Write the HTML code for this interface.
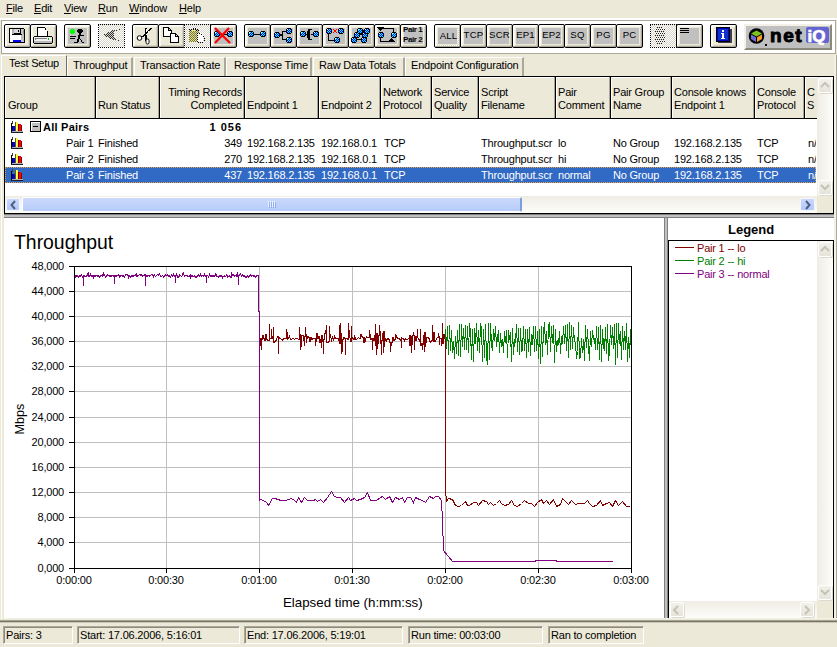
<!DOCTYPE html><html><head><meta charset="utf-8"><style>

*{margin:0;padding:0;box-sizing:border-box}
html,body{width:837px;height:647px;overflow:hidden;background:#ECE9D8;font-family:"Liberation Sans", sans-serif;font-size:11px;color:#000}
.ab{position:absolute}
.t{position:absolute;white-space:nowrap;line-height:13px;letter-spacing:-0.2px}
.u{text-decoration:underline}
.btn{position:absolute;top:24px;height:24px;border:1px solid #000;border-radius:2px;background:#ECE9D8;box-shadow:inset 1px 1px 0 #fff,inset -1px -1px 0 #ACA899,inset 2px 2px 0 #F7F6EF,inset -2px -2px 0 #D6D2C2}
.gin{position:absolute;left:3px;top:3px;right:3px;bottom:3px;background:#C0C0C0}
.dot{position:absolute;top:24px;height:24px;border:1px dotted #000;background:repeating-conic-gradient(#D8D5C8 0 25%,#FFFFFF 0 50%) 0 0/2px 2px}
.hd{position:absolute;top:77px;height:41px;border-right:1px solid #000}
.sp{position:absolute;background:#C0C0C0}
.stp{position:absolute;top:626px;height:18px;border-top:1px solid #ACA899;border-left:1px solid #ACA899;border-right:1px solid #fff;border-bottom:1px solid #fff;box-shadow:inset 1px 1px 0 #8C8A7C}

</style></head><body>
<div class="t" style="left:6px;top:2px"><span class="u">F</span>ile</div>
<div class="t" style="left:34px;top:2px"><span class="u">E</span>dit</div>
<div class="t" style="left:64px;top:2px"><span class="u">V</span>iew</div>
<div class="t" style="left:98px;top:2px"><span class="u">R</span>un</div>
<div class="t" style="left:129px;top:2px"><span class="u">W</span>indow</div>
<div class="t" style="left:179px;top:2px"><span class="u">H</span>elp</div>
<div class="ab" style="left:0;top:18px;width:837px;height:2px;background:#fff"></div>
<div class="ab" style="left:1px;top:20px;width:835px;height:34px;background:#fff;border-top:1px solid #ACA899;border-left:1px solid #ACA899;border-bottom:1px solid #ACA899;border-right:1px solid #ACA899"></div>
<div class="btn" style="left:4px;width:27px"></div>
<div class="btn" style="left:30px;width:27px"></div>
<div class="btn" style="left:64px;width:27px"><div class="gin"></div></div>
<div class="dot" style="left:98px;width:27px"></div>
<div class="btn" style="left:132px;width:27px"></div>
<div class="btn" style="left:158px;width:27px"></div>
<div class="dot" style="left:184px;width:27px"></div>
<div class="btn" style="left:210px;width:27px"><div class="gin"></div></div>
<div class="btn" style="left:244px;width:27px"><div class="gin"></div></div>
<div class="btn" style="left:270px;width:27px"><div class="gin"></div></div>
<div class="btn" style="left:296px;width:27px"><div class="gin"></div></div>
<div class="btn" style="left:322px;width:27px"><div class="gin"></div></div>
<div class="btn" style="left:348px;width:27px"><div class="gin"></div></div>
<div class="btn" style="left:374px;width:27px"><div class="gin"></div></div>
<div class="btn" style="left:400px;width:27px"><div class="gin"></div></div>
<div class="btn" style="left:434px;width:27px"><div class="gin"></div></div>
<div class="btn" style="left:460px;width:27px"><div class="gin"></div></div>
<div class="btn" style="left:486px;width:27px"><div class="gin"></div></div>
<div class="btn" style="left:512px;width:27px"><div class="gin"></div></div>
<div class="btn" style="left:538px;width:27px"><div class="gin"></div></div>
<div class="btn" style="left:564px;width:27px"><div class="gin"></div></div>
<div class="btn" style="left:590px;width:27px"><div class="gin"></div></div>
<div class="btn" style="left:616px;width:27px"><div class="gin"></div></div>
<div class="dot" style="left:650px;width:27px"></div>
<div class="btn" style="left:676px;width:27px"><div class="gin"></div></div>
<div class="btn" style="left:710px;width:27px"></div>
<div class="t" style="left:403px;top:25px;font-size:8px;line-height:10px;font-weight:bold;letter-spacing:-0.4px">Pair 1</div>
<div class="t" style="left:403px;top:35px;font-size:8px;line-height:10px;font-weight:bold;letter-spacing:-0.4px">Pair 2</div>
<div class="t" style="left:460px;width:27px;text-align:center;top:29px;font-size:9.6px;line-height:12px;letter-spacing:0.2px">TCP</div>
<div class="t" style="left:486px;width:27px;text-align:center;top:29px;font-size:9.6px;line-height:12px;letter-spacing:0.2px">SCR</div>
<div class="t" style="left:512px;width:27px;text-align:center;top:29px;font-size:9.6px;line-height:12px;letter-spacing:0.2px">EP1</div>
<div class="t" style="left:538px;width:27px;text-align:center;top:29px;font-size:9.6px;line-height:12px;letter-spacing:0.2px">EP2</div>
<div class="t" style="left:564px;width:27px;text-align:center;top:29px;font-size:9.6px;line-height:12px;letter-spacing:0.2px">SQ</div>
<div class="t" style="left:590px;width:27px;text-align:center;top:29px;font-size:9.6px;line-height:12px;letter-spacing:0.2px">PG</div>
<div class="t" style="left:616px;width:27px;text-align:center;top:29px;font-size:9.6px;line-height:12px;letter-spacing:0.2px">PC</div>
<div class="ab" style="left:436px;top:26px;width:23px;height:20px;border:1px dotted #fff"></div>
<div class="t" style="left:435px;width:27px;text-align:center;top:30px;font-size:9.6px;line-height:12px;letter-spacing:0.2px">ALL</div>
<div class="ab" style="left:744px;top:24px;width:88px;height:26px;background:#C0C0C0;border-top:2px solid #F4F2E8;border-left:2px solid #F4F2E8;border-right:2px solid #8A8878;border-bottom:2px solid #8A8878"></div>
<svg class="ab" style="left:0;top:0" width="837" height="56" shape-rendering="crispEdges">
<defs><pattern id="bl" width="2" height="2" patternUnits="userSpaceOnUse"><rect width="2" height="2" fill="#0000FF"/><rect width="1" height="1" fill="#00FFFF"/><rect x="1" y="1" width="1" height="1" fill="#00FFFF"/></pattern><pattern id="dk" width="2" height="2" patternUnits="userSpaceOnUse"><rect width="1" height="1" fill="#000"/><rect x="1" y="1" width="1" height="1" fill="#000"/></pattern><pattern id="ol" width="2" height="2" patternUnits="userSpaceOnUse"><rect width="2" height="2" fill="#fff"/><rect width="1" height="1" fill="#808000"/><rect x="1" y="1" width="1" height="1" fill="#808000"/></pattern><pattern id="gd" width="2" height="2" patternUnits="userSpaceOnUse"><rect width="2" height="2" fill="#fff"/><rect width="1" height="1" fill="#C8C4B8"/><rect x="1" y="1" width="1" height="1" fill="#C8C4B8"/></pattern></defs>
<rect x="9" y="28" width="15" height="15" fill="#000"/>
<rect x="24" y="29" width="1" height="14" fill="#000"/>
<rect x="10" y="29" width="3" height="13" fill="#fff"/>
<rect x="12" y="29" width="2" height="13" fill="#B0B0B0"/>
<rect x="21" y="29" width="3" height="13" fill="#C8C8C8"/>
<rect x="23" y="30" width="1" height="12" fill="#909090"/>
<rect x="14" y="29" width="6" height="4" fill="#D8D8D8"/>
<rect x="18" y="30" width="1" height="2" fill="#000"/>
<rect x="13" y="35" width="8" height="5" fill="#fff"/>
<rect x="13" y="40" width="8" height="2" fill="#0000FF"/>
<rect x="10" y="34" width="3" height="8" fill="#fff"/>
<rect x="21" y="34" width="3" height="8" fill="#C0C0C0"/>
<rect x="14" y="33" width="6" height="1" fill="#000"/>
<rect x="12" y="34" width="10" height="1" fill="#000"/>
<rect x="37" y="27" width="8" height="1" fill="#000"/>
<rect x="37" y="27" width="1" height="10" fill="#000"/>
<rect x="38" y="28" width="7" height="8" fill="#fff"/>
<rect x="45" y="28" width="1" height="2" fill="#000"/>
<rect x="46" y="30" width="1" height="2" fill="#000"/>
<rect x="47" y="31" width="1" height="5" fill="#000"/>
<rect x="44" y="30" width="3" height="2" fill="#fff"/>
<rect x="38" y="32" width="9" height="4" fill="#fff"/>
<rect x="34" y="36" width="18" height="1" fill="#000"/>
<rect x="33" y="37" width="1" height="6" fill="#000"/>
<rect x="52" y="37" width="1" height="6" fill="#000"/>
<rect x="34" y="43" width="18" height="1" fill="#000"/>
<rect x="34" y="37" width="18" height="6" fill="#F0F0F0"/>
<rect x="35" y="38" width="12" height="1" fill="#808080"/>
<rect x="35" y="38" width="1" height="2" fill="#808080"/>
<rect x="48" y="38" width="1" height="2" fill="#00C000"/>
<rect x="34" y="41" width="18" height="2" fill="#B8B8B8"/>
<rect x="71" y="29" width="3" height="5" fill="#00FF00"/>
<rect x="70" y="30" width="5" height="3" fill="#00FF00"/>
<rect x="78" y="29" width="4" height="4" fill="#000"/>
<rect x="77" y="30" width="6" height="2" fill="#000"/>
<rect x="79" y="33" width="2" height="3" fill="#000"/>
<rect x="78" y="35" width="2" height="4" fill="#000"/>
<rect x="80" y="35" width="4" height="1" fill="#000"/>
<rect x="77" y="39" width="2" height="3" fill="#000"/>
<rect x="74" y="42" width="4" height="1" fill="#000"/>
<rect x="80" y="39" width="1" height="1" fill="#000"/>
<rect x="81" y="40" width="1" height="2" fill="#000"/>
<rect x="82" y="42" width="2" height="1" fill="#000"/>
<rect x="70" y="36" width="6" height="1" fill="#000"/>
<rect x="70" y="38" width="5" height="1" fill="#000"/>
<rect x="119" y="29" width="1" height="1" fill="#303030"/>
<rect x="112" y="30" width="1" height="1" fill="#303030"/>
<rect x="114" y="30" width="1" height="1" fill="#303030"/>
<rect x="116" y="30" width="1" height="1" fill="#303030"/>
<rect x="111" y="31" width="1" height="1" fill="#303030"/>
<rect x="113" y="31" width="1" height="1" fill="#303030"/>
<rect x="108" y="32" width="1" height="1" fill="#303030"/>
<rect x="110" y="32" width="1" height="1" fill="#303030"/>
<rect x="112" y="32" width="1" height="1" fill="#303030"/>
<rect x="107" y="33" width="1" height="1" fill="#303030"/>
<rect x="109" y="33" width="1" height="1" fill="#303030"/>
<rect x="111" y="33" width="1" height="1" fill="#303030"/>
<rect x="113" y="33" width="1" height="1" fill="#303030"/>
<rect x="104" y="34" width="1" height="1" fill="#303030"/>
<rect x="106" y="34" width="1" height="1" fill="#303030"/>
<rect x="108" y="34" width="1" height="1" fill="#303030"/>
<rect x="110" y="34" width="1" height="1" fill="#303030"/>
<rect x="112" y="34" width="1" height="1" fill="#303030"/>
<rect x="105" y="35" width="1" height="1" fill="#303030"/>
<rect x="107" y="35" width="1" height="1" fill="#303030"/>
<rect x="109" y="35" width="1" height="1" fill="#303030"/>
<rect x="111" y="35" width="1" height="1" fill="#303030"/>
<rect x="113" y="35" width="1" height="1" fill="#303030"/>
<rect x="106" y="36" width="1" height="1" fill="#303030"/>
<rect x="108" y="36" width="1" height="1" fill="#303030"/>
<rect x="110" y="36" width="1" height="1" fill="#303030"/>
<rect x="112" y="36" width="1" height="1" fill="#303030"/>
<rect x="109" y="37" width="1" height="1" fill="#303030"/>
<rect x="111" y="37" width="1" height="1" fill="#303030"/>
<rect x="113" y="37" width="1" height="1" fill="#303030"/>
<rect x="110" y="38" width="1" height="1" fill="#303030"/>
<rect x="112" y="38" width="1" height="1" fill="#303030"/>
<rect x="114" y="38" width="1" height="1" fill="#303030"/>
<rect x="113" y="39" width="1" height="1" fill="#303030"/>
<rect x="115" y="39" width="1" height="1" fill="#303030"/>
<rect x="118" y="40" width="1" height="1" fill="#303030"/>
<rect x="145" y="28" width="2" height="13" fill="#000"/>
<rect x="146" y="29" width="1" height="6" fill="#fff"/>
<rect x="150" y="28" width="2" height="1" fill="#000"/>
<rect x="149" y="29" width="2" height="1" fill="#000"/>
<rect x="148" y="30" width="2" height="1" fill="#000"/>
<rect x="147" y="31" width="2" height="1" fill="#000"/>
<rect x="146" y="32" width="2" height="1" fill="#000"/>
<rect x="145" y="33" width="2" height="1" fill="#000"/>
<rect x="144" y="34" width="2" height="1" fill="#000"/>
<rect x="148" y="31" width="1" height="2" fill="#fff"/>
<circle cx="139.5" cy="38" r="2.3" fill="#fff" stroke="#000" stroke-width="1" shape-rendering="auto"/>
<rect x="141" y="36" width="3" height="1" fill="#000"/>
<rect x="143" y="35" width="2" height="1" fill="#000"/>
<rect x="146" y="39" width="3" height="5" rx="1.4" fill="#fff" stroke="#000" stroke-width="1" shape-rendering="auto"/>
<rect x="163" y="27" width="6" height="1" fill="#000"/>
<rect x="163" y="27" width="1" height="10" fill="#000"/>
<rect x="163" y="36" width="9" height="1" fill="#000"/>
<rect x="171" y="30" width="1" height="7" fill="#000"/>
<rect x="164" y="28" width="5" height="8" fill="#fff"/>
<rect x="169" y="30" width="2" height="6" fill="#fff"/>
<rect x="169" y="28" width="1" height="1" fill="#000"/>
<rect x="170" y="29" width="1" height="1" fill="#000"/>
<rect x="168" y="28" width="1" height="3" fill="#000"/>
<rect x="168" y="30" width="3" height="1" fill="#000"/>
<rect x="170" y="33" width="6" height="1" fill="#000"/>
<rect x="170" y="33" width="1" height="10" fill="#000"/>
<rect x="170" y="42" width="9" height="1" fill="#000"/>
<rect x="178" y="36" width="1" height="7" fill="#000"/>
<rect x="171" y="34" width="5" height="8" fill="#fff"/>
<rect x="176" y="36" width="2" height="6" fill="#fff"/>
<rect x="176" y="34" width="1" height="1" fill="#000"/>
<rect x="177" y="35" width="1" height="1" fill="#000"/>
<rect x="175" y="34" width="1" height="3" fill="#000"/>
<rect x="175" y="36" width="3" height="1" fill="#000"/>
<rect x="189" y="29" width="1" height="1" fill="#000"/>
<rect x="191" y="29" width="1" height="1" fill="#000"/>
<rect x="193" y="29" width="1" height="1" fill="#000"/>
<rect x="195" y="29" width="1" height="1" fill="#000"/>
<rect x="197" y="29" width="1" height="1" fill="#000"/>
<rect x="190" y="30" width="1" height="1" fill="#000"/>
<rect x="192" y="30" width="1" height="1" fill="#000"/>
<rect x="194" y="30" width="1" height="1" fill="#000"/>
<rect x="196" y="30" width="1" height="1" fill="#000"/>
<rect x="198" y="30" width="1" height="1" fill="#000"/>
<rect x="189" y="31" width="1" height="1" fill="#808000"/>
<rect x="191" y="31" width="1" height="1" fill="#808000"/>
<rect x="193" y="31" width="1" height="1" fill="#808000"/>
<rect x="195" y="31" width="1" height="1" fill="#808000"/>
<rect x="197" y="31" width="1" height="1" fill="#808000"/>
<rect x="190" y="32" width="1" height="1" fill="#808000"/>
<rect x="192" y="32" width="1" height="1" fill="#808000"/>
<rect x="194" y="32" width="1" height="1" fill="#808000"/>
<rect x="196" y="32" width="1" height="1" fill="#808000"/>
<rect x="198" y="32" width="1" height="1" fill="#808000"/>
<rect x="189" y="33" width="1" height="1" fill="#808000"/>
<rect x="191" y="33" width="1" height="1" fill="#808000"/>
<rect x="193" y="33" width="1" height="1" fill="#808000"/>
<rect x="195" y="33" width="1" height="1" fill="#808000"/>
<rect x="197" y="33" width="1" height="1" fill="#808000"/>
<rect x="190" y="34" width="1" height="1" fill="#808000"/>
<rect x="192" y="34" width="1" height="1" fill="#808000"/>
<rect x="194" y="34" width="1" height="1" fill="#808000"/>
<rect x="196" y="34" width="1" height="1" fill="#808000"/>
<rect x="198" y="34" width="1" height="1" fill="#808000"/>
<rect x="189" y="35" width="1" height="1" fill="#808000"/>
<rect x="191" y="35" width="1" height="1" fill="#808000"/>
<rect x="193" y="35" width="1" height="1" fill="#808000"/>
<rect x="195" y="35" width="1" height="1" fill="#808000"/>
<rect x="197" y="35" width="1" height="1" fill="#808000"/>
<rect x="190" y="36" width="1" height="1" fill="#808000"/>
<rect x="192" y="36" width="1" height="1" fill="#808000"/>
<rect x="194" y="36" width="1" height="1" fill="#808000"/>
<rect x="196" y="36" width="1" height="1" fill="#808000"/>
<rect x="198" y="36" width="1" height="1" fill="#808000"/>
<rect x="189" y="37" width="1" height="1" fill="#808000"/>
<rect x="191" y="37" width="1" height="1" fill="#808000"/>
<rect x="193" y="37" width="1" height="1" fill="#808000"/>
<rect x="195" y="37" width="1" height="1" fill="#808000"/>
<rect x="197" y="37" width="1" height="1" fill="#808000"/>
<rect x="190" y="38" width="1" height="1" fill="#808000"/>
<rect x="192" y="38" width="1" height="1" fill="#808000"/>
<rect x="194" y="38" width="1" height="1" fill="#808000"/>
<rect x="196" y="38" width="1" height="1" fill="#808000"/>
<rect x="198" y="38" width="1" height="1" fill="#808000"/>
<rect x="189" y="39" width="1" height="1" fill="#808000"/>
<rect x="191" y="39" width="1" height="1" fill="#808000"/>
<rect x="193" y="39" width="1" height="1" fill="#808000"/>
<rect x="195" y="39" width="1" height="1" fill="#808000"/>
<rect x="197" y="39" width="1" height="1" fill="#808000"/>
<rect x="190" y="40" width="1" height="1" fill="#808000"/>
<rect x="192" y="40" width="1" height="1" fill="#808000"/>
<rect x="194" y="40" width="1" height="1" fill="#808000"/>
<rect x="196" y="40" width="1" height="1" fill="#808000"/>
<rect x="198" y="40" width="1" height="1" fill="#808000"/>
<rect x="189" y="41" width="1" height="1" fill="#808000"/>
<rect x="191" y="41" width="1" height="1" fill="#808000"/>
<rect x="193" y="41" width="1" height="1" fill="#808000"/>
<rect x="195" y="41" width="1" height="1" fill="#808000"/>
<rect x="197" y="41" width="1" height="1" fill="#808000"/>
<rect x="193" y="28" width="1" height="1" fill="#000"/>
<rect x="195" y="28" width="1" height="1" fill="#000"/>
<rect x="192" y="30" width="1" height="1" fill="#FFFF00"/>
<rect x="194" y="30" width="1" height="1" fill="#FFFF00"/>
<rect x="197" y="33" width="6" height="9" fill="#fff"/>
<rect x="197" y="33" width="1" height="1" fill="#000"/>
<rect x="199" y="33" width="1" height="1" fill="#000"/>
<rect x="201" y="34" width="1" height="1" fill="#000"/>
<rect x="203" y="36" width="1" height="1" fill="#000"/>
<rect x="204" y="38" width="1" height="1" fill="#000"/>
<rect x="204" y="40" width="1" height="1" fill="#000"/>
<rect x="202" y="42" width="1" height="1" fill="#000"/>
<rect x="200" y="42" width="1" height="1" fill="#000"/>
<rect x="198" y="42" width="1" height="1" fill="#000"/>
<rect x="197" y="35" width="1" height="1" fill="#000"/>
<rect x="197" y="37" width="1" height="1" fill="#000"/>
<rect x="197" y="39" width="1" height="1" fill="#000"/>
<rect x="197" y="41" width="1" height="1" fill="#000"/>
<rect x="215" y="31" width="4" height="6" fill="#000"/>
<rect x="214" y="32" width="6" height="4" fill="#000"/>
<rect x="215" y="32" width="4" height="4" fill="url(#bl)"/>
<rect x="215" y="32" width="1" height="1" fill="#fff"/>
<rect x="228" y="31" width="4" height="6" fill="#000"/>
<rect x="227" y="32" width="6" height="4" fill="#000"/>
<rect x="228" y="32" width="4" height="4" fill="url(#bl)"/>
<rect x="228" y="32" width="1" height="1" fill="#fff"/>
<rect x="220" y="34" width="7" height="1" fill="#000"/>
<path d="M215 28 L230 43 M229 28 L215 43" stroke="#FF0000" stroke-width="2.2" shape-rendering="auto"/>
<rect x="249" y="31" width="4" height="6" fill="#000"/>
<rect x="248" y="32" width="6" height="4" fill="#000"/>
<rect x="249" y="32" width="4" height="4" fill="url(#bl)"/>
<rect x="249" y="32" width="1" height="1" fill="#fff"/>
<rect x="261" y="31" width="4" height="6" fill="#000"/>
<rect x="260" y="32" width="6" height="4" fill="#000"/>
<rect x="261" y="32" width="4" height="4" fill="url(#bl)"/>
<rect x="261" y="32" width="1" height="1" fill="#fff"/>
<rect x="254" y="34" width="6" height="1" fill="#000"/>
<rect x="275" y="32" width="4" height="6" fill="#000"/>
<rect x="274" y="33" width="6" height="4" fill="#000"/>
<rect x="275" y="33" width="4" height="4" fill="url(#bl)"/>
<rect x="275" y="33" width="1" height="1" fill="#fff"/>
<rect x="287" y="28" width="4" height="6" fill="#000"/>
<rect x="286" y="29" width="6" height="4" fill="#000"/>
<rect x="287" y="29" width="4" height="4" fill="url(#bl)"/>
<rect x="287" y="29" width="1" height="1" fill="#fff"/>
<rect x="287" y="37" width="4" height="6" fill="#000"/>
<rect x="286" y="38" width="6" height="4" fill="#000"/>
<rect x="287" y="38" width="4" height="4" fill="url(#bl)"/>
<rect x="287" y="38" width="1" height="1" fill="#fff"/>
<rect x="280" y="34" width="3" height="2" fill="#000"/>
<rect x="282" y="31" width="1" height="9" fill="#000"/>
<rect x="283" y="31" width="3" height="1" fill="#000"/>
<rect x="283" y="39" width="3" height="1" fill="#000"/>
<rect x="301" y="31" width="4" height="6" fill="#000"/>
<rect x="300" y="32" width="6" height="4" fill="#000"/>
<rect x="301" y="32" width="4" height="4" fill="url(#bl)"/>
<rect x="301" y="32" width="1" height="1" fill="#fff"/>
<rect x="314" y="31" width="4" height="6" fill="#000"/>
<rect x="313" y="32" width="6" height="4" fill="#000"/>
<rect x="314" y="32" width="4" height="4" fill="url(#bl)"/>
<rect x="314" y="32" width="1" height="1" fill="#fff"/>
<rect x="306" y="34" width="2" height="1" fill="#000"/>
<rect x="311" y="34" width="2" height="1" fill="#000"/>
<rect x="308" y="29" width="2" height="11" fill="#000"/>
<rect x="307" y="31" width="1" height="7" fill="#000"/>
<rect x="310" y="29" width="2" height="1" fill="#000"/>
<rect x="310" y="39" width="2" height="1" fill="#000"/>
<rect x="327" y="28" width="4" height="6" fill="#000"/>
<rect x="326" y="29" width="6" height="4" fill="#000"/>
<rect x="327" y="29" width="4" height="4" fill="url(#bl)"/>
<rect x="327" y="29" width="1" height="1" fill="#fff"/>
<rect x="339" y="28" width="4" height="6" fill="#000"/>
<rect x="338" y="29" width="6" height="4" fill="#000"/>
<rect x="339" y="29" width="4" height="4" fill="url(#bl)"/>
<rect x="339" y="29" width="1" height="1" fill="#fff"/>
<rect x="335" y="37" width="4" height="6" fill="#000"/>
<rect x="334" y="38" width="6" height="4" fill="#000"/>
<rect x="335" y="38" width="4" height="4" fill="url(#bl)"/>
<rect x="335" y="38" width="1" height="1" fill="#fff"/>
<path d="M333 29 L337 33 M337 29 L333 33" stroke="#FF0000" stroke-width="1" shape-rendering="auto"/>
<rect x="328" y="34" width="1" height="6" fill="#000"/>
<rect x="328" y="40" width="6" height="1" fill="#000"/>
<rect x="352" y="37" width="4" height="6" fill="#000"/>
<rect x="351" y="38" width="6" height="4" fill="#000"/>
<rect x="352" y="38" width="4" height="4" fill="url(#bl)"/>
<rect x="352" y="38" width="1" height="1" fill="#fff"/>
<rect x="362" y="37" width="4" height="6" fill="#000"/>
<rect x="361" y="38" width="6" height="4" fill="#000"/>
<rect x="362" y="38" width="4" height="4" fill="url(#bl)"/>
<rect x="362" y="38" width="1" height="1" fill="#fff"/>
<rect x="355" y="32" width="4" height="6" fill="#000"/>
<rect x="354" y="33" width="6" height="4" fill="#000"/>
<rect x="355" y="33" width="4" height="4" fill="url(#bl)"/>
<rect x="355" y="33" width="1" height="1" fill="#fff"/>
<rect x="363" y="32" width="4" height="6" fill="#000"/>
<rect x="362" y="33" width="6" height="4" fill="#000"/>
<rect x="363" y="33" width="4" height="4" fill="url(#bl)"/>
<rect x="363" y="33" width="1" height="1" fill="#fff"/>
<rect x="358" y="28" width="4" height="6" fill="#000"/>
<rect x="357" y="29" width="6" height="4" fill="#000"/>
<rect x="358" y="29" width="4" height="4" fill="url(#bl)"/>
<rect x="358" y="29" width="1" height="1" fill="#fff"/>
<rect x="365" y="28" width="4" height="6" fill="#000"/>
<rect x="364" y="29" width="6" height="4" fill="#000"/>
<rect x="365" y="29" width="4" height="4" fill="url(#bl)"/>
<rect x="365" y="29" width="1" height="1" fill="#fff"/>
<rect x="357" y="39" width="4" height="1" fill="#000"/>
<rect x="360" y="34" width="2" height="1" fill="#000"/>
<rect x="363" y="30" width="1" height="2" fill="#000"/>
<rect x="379" y="32" width="4" height="6" fill="#000"/>
<rect x="378" y="33" width="6" height="4" fill="#000"/>
<rect x="379" y="33" width="4" height="4" fill="url(#bl)"/>
<rect x="379" y="33" width="1" height="1" fill="#fff"/>
<rect x="392" y="32" width="4" height="6" fill="#000"/>
<rect x="391" y="33" width="6" height="4" fill="#000"/>
<rect x="392" y="33" width="4" height="4" fill="url(#bl)"/>
<rect x="392" y="33" width="1" height="1" fill="#fff"/>
<rect x="380" y="28" width="14" height="1" fill="#000"/>
<rect x="393" y="28" width="1" height="4" fill="#000"/>
<rect x="380" y="38" width="1" height="4" fill="#000"/>
<rect x="380" y="41" width="14" height="1" fill="#000"/>
<path d="M377 27 L384 27 L380 31 Z M388 42 L395 42 L391 38 Z" fill="#000"/>
<rect x="680" y="28" width="9" height="1" fill="#000"/>
<rect x="680" y="30" width="9" height="1" fill="#000"/>
<rect x="680" y="32" width="9" height="1" fill="#000"/>
<rect x="657" y="27" width="1" height="1" fill="#202020"/>
<rect x="659" y="27" width="1" height="1" fill="#202020"/>
<rect x="661" y="27" width="1" height="1" fill="#202020"/>
<rect x="656" y="29" width="1" height="1" fill="#202020"/>
<rect x="658" y="29" width="1" height="1" fill="#202020"/>
<rect x="660" y="29" width="1" height="1" fill="#202020"/>
<rect x="662" y="29" width="1" height="1" fill="#202020"/>
<rect x="664" y="29" width="1" height="1" fill="#202020"/>
<rect x="655" y="31" width="1" height="1" fill="#202020"/>
<rect x="657" y="31" width="1" height="1" fill="#202020"/>
<rect x="659" y="31" width="1" height="1" fill="#202020"/>
<rect x="661" y="31" width="1" height="1" fill="#202020"/>
<rect x="663" y="31" width="1" height="1" fill="#202020"/>
<rect x="656" y="33" width="1" height="1" fill="#202020"/>
<rect x="658" y="33" width="1" height="1" fill="#202020"/>
<rect x="660" y="33" width="1" height="1" fill="#202020"/>
<rect x="662" y="33" width="1" height="1" fill="#202020"/>
<rect x="664" y="33" width="1" height="1" fill="#202020"/>
<rect x="655" y="35" width="1" height="1" fill="#202020"/>
<rect x="657" y="35" width="1" height="1" fill="#202020"/>
<rect x="659" y="35" width="1" height="1" fill="#202020"/>
<rect x="661" y="35" width="1" height="1" fill="#202020"/>
<rect x="663" y="35" width="1" height="1" fill="#202020"/>
<rect x="656" y="37" width="1" height="1" fill="#202020"/>
<rect x="658" y="37" width="1" height="1" fill="#202020"/>
<rect x="660" y="37" width="1" height="1" fill="#202020"/>
<rect x="662" y="37" width="1" height="1" fill="#202020"/>
<rect x="664" y="37" width="1" height="1" fill="#202020"/>
<rect x="655" y="39" width="1" height="1" fill="#202020"/>
<rect x="657" y="39" width="1" height="1" fill="#202020"/>
<rect x="659" y="39" width="1" height="1" fill="#202020"/>
<rect x="661" y="39" width="1" height="1" fill="#202020"/>
<rect x="663" y="39" width="1" height="1" fill="#202020"/>
<rect x="656" y="41" width="1" height="1" fill="#202020"/>
<rect x="658" y="41" width="1" height="1" fill="#202020"/>
<rect x="660" y="41" width="1" height="1" fill="#202020"/>
<rect x="662" y="41" width="1" height="1" fill="#202020"/>
<rect x="664" y="41" width="1" height="1" fill="#202020"/>
<rect x="657" y="43" width="1" height="1" fill="#202020"/>
<rect x="659" y="43" width="1" height="1" fill="#202020"/>
<rect x="661" y="43" width="1" height="1" fill="#202020"/>
<rect x="716" y="27" width="14" height="15" fill="#000"/>
<rect x="717" y="28" width="12" height="13" fill="#0000C0"/>
<rect x="718" y="29" width="10" height="11" fill="url(#bl)"/>
<rect x="718" y="29" width="10" height="11" fill="#1030D0"/>
<rect x="730" y="29" width="2" height="14" fill="#404040"/>
<rect x="718" y="42" width="14" height="1" fill="#404040"/>
<rect x="722" y="30" width="2" height="2" fill="#fff"/>
<rect x="721" y="33" width="3" height="1" fill="#fff"/>
<rect x="722" y="34" width="2" height="4" fill="#fff"/>
<rect x="721" y="38" width="4" height="1" fill="#fff"/>
<circle cx="756.5" cy="36" r="7.8" fill="#000" shape-rendering="auto"/>
<path d="M751 33.5 L756.5 30.5 L762 33.5 L756.5 36.5 Z" fill="#7BC31E" shape-rendering="auto"/>
<path d="M751 34.5 L756 37.2 L756 42 L751 39 Z" fill="#6A6ADA" shape-rendering="auto"/>
<path d="M762 34.5 L757 37.2 L757 42 L762 39 Z" fill="#F59A2A" shape-rendering="auto"/>
<rect x="765" y="44" width="2" height="2" fill="#000"/>
<text x="770" y="42" font-family="Liberation Sans" font-weight="bold" font-size="19" letter-spacing="1.6" fill="#000" stroke="#000" stroke-width="1" shape-rendering="auto">net</text>
<rect x="806" y="27" width="23" height="16" rx="3" fill="#6464D0"/>
<text x="807.5" y="42" font-family="Liberation Sans" font-weight="bold" font-size="17" letter-spacing="0" fill="#fff" stroke="#fff" stroke-width="0.7" shape-rendering="auto">iQ</text>
</svg>
<div class="ab" style="left:0;top:55px;width:837px;height:22px;background:#ECE9D8"></div>
<div class="ab" style="left:67px;top:57px;width:66px;height:19px;border-top:1px solid #fff;border-left:1px solid #fff;border-right:2px solid #ACA899"></div>
<div class="t" style="left:73px;top:59px">Throughput</div>
<div class="ab" style="left:134px;top:57px;width:92px;height:19px;border-top:1px solid #fff;border-left:1px solid #fff;border-right:2px solid #ACA899"></div>
<div class="t" style="left:140px;top:59px">Transaction Rate</div>
<div class="ab" style="left:226px;top:57px;width:86px;height:19px;border-top:1px solid #fff;border-left:1px solid #fff;border-right:2px solid #ACA899"></div>
<div class="t" style="left:234px;top:59px">Response Time</div>
<div class="ab" style="left:313px;top:57px;width:92px;height:19px;border-top:1px solid #fff;border-left:1px solid #fff;border-right:2px solid #ACA899"></div>
<div class="t" style="left:319px;top:59px">Raw Data Totals</div>
<div class="ab" style="left:405px;top:57px;width:119px;height:19px;border-top:1px solid #fff;border-left:1px solid #fff;border-right:2px solid #ACA899"></div>
<div class="t" style="left:411px;top:59px">Endpoint Configuration</div>
<div class="ab" style="left:1px;top:55px;width:66px;height:21px;border-top:1px solid #fff;border-left:1px solid #fff;border-right:1px solid #716F64;background:#ECE9D8"></div>
<div class="t" style="left:9px;top:57px">Test Setup</div>
<div class="ab" style="left:4px;top:76px;width:830px;height:138px;border:1px solid #000;background:#fff"></div>
<div class="ab" style="left:5px;top:77px;width:812px;height:42px;background:#ECE9D8;border-bottom:1px solid #000"></div>
<div class="ab" style="left:5px;top:77px;width:1px;height:41px;background:#fff"></div>
<div class="ab" style="left:5px;top:77px;width:812px;height:1px;background:#fff"></div>
<div class="ab" style="left:94px;top:77px;width:1px;height:41px;background:#ACA899"></div>
<div class="ab" style="left:95px;top:77px;width:1px;height:41px;background:#000"></div>
<div class="ab" style="left:96px;top:77px;width:1px;height:41px;background:#fff"></div>
<div class="ab" style="left:158px;top:77px;width:1px;height:41px;background:#ACA899"></div>
<div class="ab" style="left:159px;top:77px;width:1px;height:41px;background:#000"></div>
<div class="ab" style="left:160px;top:77px;width:1px;height:41px;background:#fff"></div>
<div class="ab" style="left:243px;top:77px;width:1px;height:41px;background:#ACA899"></div>
<div class="ab" style="left:244px;top:77px;width:1px;height:41px;background:#000"></div>
<div class="ab" style="left:245px;top:77px;width:1px;height:41px;background:#fff"></div>
<div class="ab" style="left:317px;top:77px;width:1px;height:41px;background:#ACA899"></div>
<div class="ab" style="left:318px;top:77px;width:1px;height:41px;background:#000"></div>
<div class="ab" style="left:319px;top:77px;width:1px;height:41px;background:#fff"></div>
<div class="ab" style="left:379px;top:77px;width:1px;height:41px;background:#ACA899"></div>
<div class="ab" style="left:380px;top:77px;width:1px;height:41px;background:#000"></div>
<div class="ab" style="left:381px;top:77px;width:1px;height:41px;background:#fff"></div>
<div class="ab" style="left:430px;top:77px;width:1px;height:41px;background:#ACA899"></div>
<div class="ab" style="left:431px;top:77px;width:1px;height:41px;background:#000"></div>
<div class="ab" style="left:432px;top:77px;width:1px;height:41px;background:#fff"></div>
<div class="ab" style="left:477px;top:77px;width:1px;height:41px;background:#ACA899"></div>
<div class="ab" style="left:478px;top:77px;width:1px;height:41px;background:#000"></div>
<div class="ab" style="left:479px;top:77px;width:1px;height:41px;background:#fff"></div>
<div class="ab" style="left:554px;top:77px;width:1px;height:41px;background:#ACA899"></div>
<div class="ab" style="left:555px;top:77px;width:1px;height:41px;background:#000"></div>
<div class="ab" style="left:556px;top:77px;width:1px;height:41px;background:#fff"></div>
<div class="ab" style="left:609px;top:77px;width:1px;height:41px;background:#ACA899"></div>
<div class="ab" style="left:610px;top:77px;width:1px;height:41px;background:#000"></div>
<div class="ab" style="left:611px;top:77px;width:1px;height:41px;background:#fff"></div>
<div class="ab" style="left:670px;top:77px;width:1px;height:41px;background:#ACA899"></div>
<div class="ab" style="left:671px;top:77px;width:1px;height:41px;background:#000"></div>
<div class="ab" style="left:672px;top:77px;width:1px;height:41px;background:#fff"></div>
<div class="ab" style="left:753px;top:77px;width:1px;height:41px;background:#ACA899"></div>
<div class="ab" style="left:754px;top:77px;width:1px;height:41px;background:#000"></div>
<div class="ab" style="left:755px;top:77px;width:1px;height:41px;background:#fff"></div>
<div class="ab" style="left:803px;top:77px;width:1px;height:41px;background:#ACA899"></div>
<div class="ab" style="left:804px;top:77px;width:1px;height:41px;background:#000"></div>
<div class="ab" style="left:805px;top:77px;width:1px;height:41px;background:#fff"></div>
<div class="t" style="left:8px;top:99px">Group</div>
<div class="t" style="left:98px;top:99px">Run Status</div>
<div class="t" style="right:595px;top:86px;text-align:right">Timing Records</div>
<div class="t" style="right:595px;top:99px;text-align:right">Completed</div>
<div class="t" style="left:247px;top:99px">Endpoint 1</div>
<div class="t" style="left:321px;top:99px">Endpoint 2</div>
<div class="t" style="left:383px;top:86px">Network</div>
<div class="t" style="left:383px;top:99px">Protocol</div>
<div class="t" style="left:434px;top:86px">Service</div>
<div class="t" style="left:434px;top:99px">Quality</div>
<div class="t" style="left:481px;top:86px">Script</div>
<div class="t" style="left:481px;top:99px">Filename</div>
<div class="t" style="left:558px;top:86px">Pair</div>
<div class="t" style="left:558px;top:99px">Comment</div>
<div class="t" style="left:613px;top:86px">Pair Group</div>
<div class="t" style="left:613px;top:99px">Name</div>
<div class="t" style="left:674px;top:86px">Console knows</div>
<div class="t" style="left:674px;top:99px">Endpoint 1</div>
<div class="t" style="left:757px;top:86px">Console</div>
<div class="t" style="left:757px;top:99px">Protocol</div>
<div class="t" style="left:807px;top:86px">C</div>
<div class="t" style="left:807px;top:99px">S</div>
<div class="ab" style="left:5px;top:167px;width:811px;height:16px;background:#316AC5;outline:1px dotted #E8A040;outline-offset:-1px"></div>
<div class="t" style="left:43px;top:121px;font-weight:bold;letter-spacing:0.25px;color:#000">All Pairs</div>
<div class="t" style="right:595px;top:121px;font-weight:bold;letter-spacing:1px;color:#000">1 056</div>
<div class="t" style="left:66px;top:137px;color:#000">Pair 1</div>
<div class="t" style="left:98px;top:137px;color:#000">Finished</div>
<div class="t" style="right:595px;top:137px;color:#000">349</div>
<div class="t" style="left:247px;top:137px;width:70px;overflow:hidden;color:#000">192.168.2.135</div>
<div class="t" style="left:321px;top:137px;width:58px;overflow:hidden;color:#000">192.168.0.1</div>
<div class="t" style="left:384px;top:137px;width:46px;overflow:hidden;color:#000">TCP</div>
<div class="t" style="left:481px;top:137px;width:73px;overflow:hidden;color:#000">Throughput.scr</div>
<div class="t" style="left:558px;top:137px;width:51px;overflow:hidden;color:#000">lo</div>
<div class="t" style="left:613px;top:137px;width:57px;overflow:hidden;color:#000">No Group</div>
<div class="t" style="left:674px;top:137px;width:79px;overflow:hidden;color:#000">192.168.2.135</div>
<div class="t" style="left:757px;top:137px;width:46px;overflow:hidden;color:#000">TCP</div>
<div class="t" style="left:808px;top:137px;width:8px;overflow:hidden;color:#000">n/a</div>
<div class="t" style="left:66px;top:153px;color:#000">Pair 2</div>
<div class="t" style="left:98px;top:153px;color:#000">Finished</div>
<div class="t" style="right:595px;top:153px;color:#000">270</div>
<div class="t" style="left:247px;top:153px;width:70px;overflow:hidden;color:#000">192.168.2.135</div>
<div class="t" style="left:321px;top:153px;width:58px;overflow:hidden;color:#000">192.168.0.1</div>
<div class="t" style="left:384px;top:153px;width:46px;overflow:hidden;color:#000">TCP</div>
<div class="t" style="left:481px;top:153px;width:73px;overflow:hidden;color:#000">Throughput.scr</div>
<div class="t" style="left:558px;top:153px;width:51px;overflow:hidden;color:#000">hi</div>
<div class="t" style="left:613px;top:153px;width:57px;overflow:hidden;color:#000">No Group</div>
<div class="t" style="left:674px;top:153px;width:79px;overflow:hidden;color:#000">192.168.2.135</div>
<div class="t" style="left:757px;top:153px;width:46px;overflow:hidden;color:#000">TCP</div>
<div class="t" style="left:808px;top:153px;width:8px;overflow:hidden;color:#000">n/a</div>
<div class="t" style="left:66px;top:169px;color:#fff">Pair 3</div>
<div class="t" style="left:98px;top:169px;color:#fff">Finished</div>
<div class="t" style="right:595px;top:169px;color:#fff">437</div>
<div class="t" style="left:247px;top:169px;width:70px;overflow:hidden;color:#fff">192.168.2.135</div>
<div class="t" style="left:321px;top:169px;width:58px;overflow:hidden;color:#fff">192.168.0.1</div>
<div class="t" style="left:384px;top:169px;width:46px;overflow:hidden;color:#fff">TCP</div>
<div class="t" style="left:481px;top:169px;width:73px;overflow:hidden;color:#fff">Throughput.scr</div>
<div class="t" style="left:558px;top:169px;width:51px;overflow:hidden;color:#fff">normal</div>
<div class="t" style="left:613px;top:169px;width:57px;overflow:hidden;color:#fff">No Group</div>
<div class="t" style="left:674px;top:169px;width:79px;overflow:hidden;color:#fff">192.168.2.135</div>
<div class="t" style="left:757px;top:169px;width:46px;overflow:hidden;color:#fff">TCP</div>
<div class="t" style="left:808px;top:169px;width:8px;overflow:hidden;color:#fff">n/a</div>
<svg class="ab" style="left:10px;top:121px" width="14" height="13" shape-rendering="crispEdges"><rect x="1" y="2" width="1" height="10" fill="#000"/><rect x="2" y="0" width="1" height="3" fill="#404040"/><rect x="1" y="11" width="12" height="1" fill="#202020"/><rect x="2" y="10" width="11" height="1" fill="#B0B0B0"/><rect x="2" y="5" width="1" height="5" fill="#000060"/><rect x="3" y="5" width="2" height="5" fill="#0000FF"/><rect x="5" y="1" width="1" height="9" fill="#606000"/><rect x="6" y="1" width="2" height="9" fill="#FFFF00"/><rect x="6" y="1" width="1" height="9" fill="#FFFF80"/><rect x="8" y="3" width="1" height="7" fill="#600000"/><rect x="9" y="3" width="2" height="7" fill="#FF0000"/><rect x="11" y="4" width="1" height="6" fill="#800000"/></svg>
<svg class="ab" style="left:10px;top:137px" width="14" height="13" shape-rendering="crispEdges"><rect x="1" y="2" width="1" height="10" fill="#000"/><rect x="2" y="0" width="1" height="3" fill="#404040"/><rect x="1" y="11" width="12" height="1" fill="#202020"/><rect x="2" y="10" width="11" height="1" fill="#B0B0B0"/><rect x="2" y="5" width="1" height="5" fill="#000060"/><rect x="3" y="5" width="2" height="5" fill="#0000FF"/><rect x="5" y="1" width="1" height="9" fill="#606000"/><rect x="6" y="1" width="2" height="9" fill="#FFFF00"/><rect x="6" y="1" width="1" height="9" fill="#FFFF80"/><rect x="8" y="3" width="1" height="7" fill="#600000"/><rect x="9" y="3" width="2" height="7" fill="#FF0000"/><rect x="11" y="4" width="1" height="6" fill="#800000"/></svg>
<svg class="ab" style="left:10px;top:153px" width="14" height="13" shape-rendering="crispEdges"><rect x="1" y="2" width="1" height="10" fill="#000"/><rect x="2" y="0" width="1" height="3" fill="#404040"/><rect x="1" y="11" width="12" height="1" fill="#202020"/><rect x="2" y="10" width="11" height="1" fill="#B0B0B0"/><rect x="2" y="5" width="1" height="5" fill="#000060"/><rect x="3" y="5" width="2" height="5" fill="#0000FF"/><rect x="5" y="1" width="1" height="9" fill="#606000"/><rect x="6" y="1" width="2" height="9" fill="#FFFF00"/><rect x="6" y="1" width="1" height="9" fill="#FFFF80"/><rect x="8" y="3" width="1" height="7" fill="#600000"/><rect x="9" y="3" width="2" height="7" fill="#FF0000"/><rect x="11" y="4" width="1" height="6" fill="#800000"/></svg>
<svg class="ab" style="left:10px;top:169px" width="14" height="13" shape-rendering="crispEdges"><rect x="1" y="2" width="1" height="10" fill="#000"/><rect x="2" y="0" width="1" height="3" fill="#404040"/><rect x="1" y="11" width="12" height="1" fill="#202020"/><rect x="2" y="10" width="11" height="1" fill="#B0B0B0"/><rect x="2" y="5" width="1" height="5" fill="#000060"/><rect x="3" y="5" width="2" height="5" fill="#0000FF"/><rect x="5" y="1" width="1" height="9" fill="#606000"/><rect x="6" y="1" width="2" height="9" fill="#FFFF00"/><rect x="6" y="1" width="1" height="9" fill="#FFFF80"/><rect x="8" y="3" width="1" height="7" fill="#600000"/><rect x="9" y="3" width="2" height="7" fill="#FF0000"/><rect x="11" y="4" width="1" height="6" fill="#800000"/></svg>
<svg class="ab" style="left:30px;top:121px" width="11" height="11" shape-rendering="crispEdges"><rect width="11" height="11" fill="#000"/><rect x="1" y="1" width="9" height="9" fill="#fff"/><rect x="2" y="2" width="8" height="8" fill="#C0C0C0"/><rect x="3" y="5" width="5" height="1" fill="#000"/></svg>
<div class="ab" style="left:817px;top:77px;width:16px;height:120px;background:linear-gradient(90deg,#EEEDE5,#FDFDFA)"></div>
<div class="ab" style="left:5px;top:196px;width:812px;height:17px;background:linear-gradient(180deg,#EFEDE4,#FDFDFA)"></div>
<div class="ab" style="left:817px;top:196px;width:16px;height:17px;background:#ECE9D8"></div>
<div class="ab" style="left:6px;top:198px;width:14px;height:13px;border-radius:2px;border:1px solid #F4F7FE;background:linear-gradient(180deg,#CAD8FC,#B4C9F8)"></div>
<svg class="ab" style="left:9px;top:200px" width="8" height="10"><path d="M6 1 L2.5 5 L6 9" fill="none" stroke="#4D6185" stroke-width="2"/></svg>
<div class="ab" style="left:22px;top:197px;width:500px;height:15px;border-radius:2px;border:1px solid #fff;border-right:2px solid #7C9FD9;background:linear-gradient(180deg,#CBD9FC,#B6CCF9)"></div>
<svg class="ab" style="left:268px;top:201px" width="9" height="7" shape-rendering="crispEdges"><path d="M0 0h1v6h-1zM2 0h1v6h-1zM4 0h1v6h-1zM6 0h1v6h-1z" fill="#EEF3FF"/><path d="M1 1h1v6h-1zM3 1h1v6h-1zM5 1h1v6h-1zM7 1h1v6h-1z" fill="#8CB0F0"/></svg>
<div class="ab" style="left:800px;top:198px;width:15px;height:13px;border-radius:2px;border:1px solid #F4F7FE;background:linear-gradient(180deg,#CAD8FC,#B4C9F8)"></div>
<svg class="ab" style="left:804px;top:200px" width="8" height="10"><path d="M2 1 L5.5 5 L2 9" fill="none" stroke="#4D6185" stroke-width="2"/></svg>
<div class="ab" style="left:818px;top:78px;width:14px;height:15px;border-radius:2px;border:1px solid #fff;background:linear-gradient(180deg,#F2F1EA,#E6E4DA);box-shadow:1px 1px 0 #DCDAD0"></div><svg class="ab" style="left:819px;top:80px" width="12" height="12"><path d="M2 7 L6 3 L10 7" fill="none" stroke="#C5C3B6" stroke-width="2"/></svg>
<div class="ab" style="left:818px;top:180px;width:14px;height:15px;border-radius:2px;border:1px solid #fff;background:linear-gradient(180deg,#F2F1EA,#E6E4DA);box-shadow:1px 1px 0 #DCDAD0"></div><svg class="ab" style="left:819px;top:182px" width="12" height="12"><path d="M2 3 L6 7 L10 3" fill="none" stroke="#C5C3B6" stroke-width="2"/></svg>
<div class="ab" style="left:4px;top:214px;width:830px;height:4px;background:#C0C0C0;border-top:1px solid #808080;border-bottom:1px solid #808080"></div>
<div class="ab" style="left:664px;top:218px;width:4px;height:400px;background:#C0C0C0;border-left:1px solid #808080;border-right:1px solid #808080"></div>
<div class="ab" style="left:4px;top:218px;width:660px;height:400px;background:#fff"></div>
<div class="ab" style="left:668px;top:218px;width:166px;height:400px;background:#fff"></div>
<div class="ab" style="left:1px;top:76px;width:1px;height:543px;background:#fff"></div>
<svg class="ab" style="left:0;top:0" width="837" height="647" shape-rendering="crispEdges">
<line x1="74" y1="542.5" x2="631" y2="542.5" stroke="#C0C0C0" stroke-width="1"/>
<line x1="74" y1="517.5" x2="631" y2="517.5" stroke="#C0C0C0" stroke-width="1"/>
<line x1="74" y1="492.5" x2="631" y2="492.5" stroke="#C0C0C0" stroke-width="1"/>
<line x1="74" y1="467.5" x2="631" y2="467.5" stroke="#C0C0C0" stroke-width="1"/>
<line x1="74" y1="442.5" x2="631" y2="442.5" stroke="#C0C0C0" stroke-width="1"/>
<line x1="74" y1="417.5" x2="631" y2="417.5" stroke="#C0C0C0" stroke-width="1"/>
<line x1="74" y1="391.5" x2="631" y2="391.5" stroke="#C0C0C0" stroke-width="1"/>
<line x1="74" y1="366.5" x2="631" y2="366.5" stroke="#C0C0C0" stroke-width="1"/>
<line x1="74" y1="341.5" x2="631" y2="341.5" stroke="#C0C0C0" stroke-width="1"/>
<line x1="74" y1="316.5" x2="631" y2="316.5" stroke="#C0C0C0" stroke-width="1"/>
<line x1="74" y1="291.5" x2="631" y2="291.5" stroke="#C0C0C0" stroke-width="1"/>
<line x1="166.5" y1="266" x2="166.5" y2="568" stroke="#C0C0C0" stroke-width="1"/>
<line x1="259.5" y1="266" x2="259.5" y2="568" stroke="#C0C0C0" stroke-width="1"/>
<line x1="352.5" y1="266" x2="352.5" y2="568" stroke="#C0C0C0" stroke-width="1"/>
<line x1="445.5" y1="266" x2="445.5" y2="568" stroke="#C0C0C0" stroke-width="1"/>
<line x1="538.5" y1="266" x2="538.5" y2="568" stroke="#C0C0C0" stroke-width="1"/>
<polyline points="74.5,274.5 74.5,273.5 75.5,276.5 75.5,277.5 76.5,276.5 76.5,275.5 77.5,276.5 77.5,275.5 78.5,276.5 78.5,277.5 79.5,275.5 79.5,276.5 80.5,276.5 80.5,276.5 81.5,274.5 81.5,275.5 82.5,276.5 82.5,277.5 83.5,276.5 83.5,285.5 83.5,275.5 84.5,275.5 84.5,276.5 85.5,276.5 85.5,276.5 86.5,275.5 86.5,276.5 87.5,275.5 87.5,274.5 88.5,272.5 88.5,272.5 88.5,276.5 89.5,275.5 89.5,276.5 90.5,274.5 90.5,273.5 91.5,276.5 91.5,276.5 92.5,275.5 92.5,276.5 93.5,275.5 93.5,278.5 93.5,275.5 94.5,275.5 94.5,276.5 95.5,275.5 95.5,276.5 96.5,275.5 96.5,275.5 97.5,275.5 97.5,276.5 98.5,275.5 98.5,276.5 99.5,276.5 99.5,277.5 100.5,275.5 100.5,275.5 101.5,275.5 101.5,275.5 102.5,276.5 102.5,276.5 103.5,272.5 103.5,275.5 104.5,274.5 104.5,275.5 105.5,276.5 105.5,277.5 106.5,275.5 106.5,276.5 107.5,274.5 107.5,274.5 108.5,275.5 108.5,275.5 109.5,276.5 109.5,275.5 110.5,275.5 110.5,276.5 111.5,276.5 111.5,275.5 112.5,275.5 112.5,275.5 113.5,275.5 113.5,276.5 114.5,276.5 114.5,283.5 114.5,275.5 115.5,275.5 115.5,276.5 116.5,275.5 116.5,276.5 117.5,275.5 117.5,275.5 118.5,275.5 118.5,274.5 119.5,276.5 119.5,277.5 120.5,275.5 120.5,276.5 121.5,275.5 121.5,275.5 122.5,276.5 122.5,275.5 123.5,275.5 123.5,276.5 124.5,276.5 124.5,277.5 125.5,274.5 125.5,275.5 126.5,274.5 126.5,274.5 127.5,275.5 127.5,274.5 128.5,275.5 128.5,278.5 128.5,276.5 129.5,276.5 129.5,275.5 130.5,276.5 130.5,277.5 131.5,275.5 131.5,276.5 132.5,276.5 132.5,275.5 133.5,275.5 133.5,276.5 134.5,275.5 134.5,275.5 135.5,274.5 135.5,275.5 136.5,275.5 136.5,272.5 136.5,276.5 137.5,276.5 137.5,275.5 138.5,275.5 138.5,275.5 139.5,274.5 139.5,274.5 140.5,275.5 140.5,274.5 141.5,275.5 141.5,274.5 142.5,275.5 142.5,276.5 143.5,275.5 143.5,275.5 144.5,275.5 144.5,274.5 145.5,274.5 145.5,285.5 145.5,274.5 146.5,275.5 146.5,276.5 147.5,275.5 147.5,276.5 148.5,275.5 148.5,275.5 149.5,275.5 149.5,276.5 150.5,275.5 150.5,275.5 151.5,274.5 151.5,274.5 152.5,274.5 152.5,274.5 153.5,276.5 153.5,276.5 154.5,274.5 154.5,275.5 155.5,276.5 155.5,276.5 156.5,275.5 156.5,275.5 157.5,274.5 157.5,274.5 158.5,275.5 158.5,274.5 159.5,274.5 159.5,273.5 160.5,276.5 160.5,275.5 161.5,276.5 161.5,276.5 162.5,275.5 162.5,275.5 163.5,276.5 163.5,277.5 164.5,275.5 164.5,275.5 165.5,275.5 165.5,274.5 166.5,275.5 166.5,275.5 167.5,274.5 167.5,275.5 168.5,275.5 168.5,276.5 169.5,275.5 169.5,276.5 170.5,276.5 170.5,277.5 171.5,274.5 171.5,275.5 172.5,275.5 172.5,276.5 173.5,274.5 173.5,274.5 174.5,276.5 174.5,276.5 175.5,275.5 175.5,282.5 175.5,276.5 176.5,274.5 176.5,274.5 177.5,276.5 177.5,277.5 178.5,276.5 178.5,277.5 179.5,275.5 179.5,274.5 180.5,275.5 180.5,275.5 181.5,276.5 181.5,276.5 182.5,275.5 182.5,274.5 183.5,272.5 183.5,274.5 184.5,275.5 184.5,276.5 185.5,275.5 185.5,275.5 186.5,275.5 186.5,275.5 187.5,275.5 187.5,276.5 188.5,276.5 188.5,276.5 189.5,275.5 189.5,276.5 190.5,274.5 190.5,278.5 190.5,274.5 191.5,275.5 191.5,276.5 192.5,275.5 192.5,276.5 193.5,276.5 193.5,276.5 194.5,276.5 194.5,275.5 195.5,276.5 195.5,277.5 196.5,276.5 196.5,277.5 197.5,275.5 197.5,276.5 198.5,274.5 198.5,275.5 199.5,275.5 199.5,276.5 200.5,275.5 200.5,272.5 200.5,274.5 201.5,275.5 201.5,276.5 202.5,275.5 202.5,275.5 203.5,276.5 203.5,276.5 204.5,274.5 204.5,274.5 205.5,276.5 205.5,276.5 206.5,275.5 206.5,282.5 206.5,275.5 207.5,275.5 207.5,275.5 208.5,276.5 208.5,277.5 209.5,274.5 209.5,274.5 210.5,276.5 210.5,276.5 211.5,275.5 211.5,276.5 212.5,275.5 212.5,276.5 213.5,276.5 213.5,275.5 214.5,275.5 214.5,276.5 215.5,274.5 215.5,273.5 216.5,275.5 216.5,276.5 217.5,276.5 217.5,276.5 218.5,276.5 218.5,277.5 219.5,276.5 219.5,275.5 220.5,275.5 220.5,276.5 221.5,276.5 221.5,275.5 222.5,276.5 222.5,278.5 222.5,277.5 223.5,276.5 223.5,276.5 224.5,275.5 224.5,276.5 225.5,276.5 225.5,276.5 226.5,275.5 226.5,274.5 227.5,276.5 227.5,277.5 228.5,276.5 228.5,276.5 229.5,275.5 229.5,276.5 230.5,276.5 230.5,277.5 231.5,276.5 231.5,271.5 231.5,277.5 232.5,274.5 232.5,275.5 233.5,274.5 233.5,275.5 234.5,275.5 234.5,276.5 235.5,275.5 235.5,275.5 236.5,276.5 236.5,276.5 237.5,272.5 237.5,276.5 238.5,275.5 238.5,284.5 238.5,275.5 239.5,275.5 239.5,274.5 240.5,274.5 240.5,273.5 241.5,276.5 241.5,275.5 242.5,275.5 242.5,274.5 243.5,275.5 243.5,276.5 244.5,276.5 244.5,275.5 245.5,276.5 245.5,277.5 246.5,276.5 246.5,277.5 247.5,276.5 247.5,275.5 248.5,276.5 248.5,277.5 249.5,275.5 249.5,275.5 250.5,275.5 250.5,274.5 251.5,275.5 251.5,276.5 252.5,275.5 252.5,275.5 253.5,275.5 253.5,276.5 254.5,275.5 254.5,276.5 255.5,276.5 255.5,277.5 256.5,275.5 256.5,276.5 257.5,275.5 257.5,275.5 258.5,275.5 258.5,310.5 259.5,312.5 259.5,500.5 260.5,499.5 263.5,500.5 266.5,502.5 268.5,505.5 272.5,498.5 275.5,498.5 277.5,499.5 281.5,500.5 285.5,500.5 288.5,499.5 291.5,498.5 294.5,500.5 296.5,502.5 298.5,497.5 301.5,502.5 304.5,497.5 307.5,500.5 310.5,500.5 313.5,500.5 315.5,499.5 317.5,501.5 320.5,499.5 323.5,502.5 327.5,497.5 331.5,491.5 334.5,496.5 337.5,497.5 340.5,497.5 344.5,502.5 348.5,497.5 350.5,500.5 354.5,498.5 356.5,500.5 360.5,499.5 364.5,497.5 367.5,492.5 370.5,500.5 373.5,500.5 376.5,500.5 380.5,497.5 382.5,496.5 385.5,499.5 389.5,496.5 392.5,502.5 395.5,497.5 399.5,499.5 402.5,497.5 404.5,502.5 407.5,497.5 410.5,497.5 413.5,502.5 415.5,497.5 419.5,499.5 422.5,500.5 425.5,502.5 429.5,496.5 433.5,498.5 435.5,496.5 438.5,496.5 441.5,500.5 442.5,520.5 443.5,550.5 452.5,561.5 534.5,561.5 536.5,560.5 555.5,560.5 557.5,561.5 612.5,561.5" fill="none" stroke="#800080" stroke-width="1"/>
<polyline points="260.5,345.5 260.5,338.5 261.5,338.5 261.5,349.5 261.5,339.5 262.5,339.5 262.5,335.5 263.5,335.5 263.5,338.5 264.5,338.5 264.5,340.5 265.5,340.5 265.5,334.5 266.5,334.5 266.5,339.5 267.5,339.5 267.5,340.5 268.5,340.5 268.5,340.5 269.5,340.5 269.5,323.5 269.5,338.5 270.5,338.5 270.5,338.5 271.5,338.5 271.5,328.5 271.5,336.5 272.5,336.5 272.5,338.5 273.5,338.5 273.5,326.5 273.5,342.5 274.5,342.5 274.5,342.5 275.5,340.5 276.5,340.5 277.5,336.5 278.5,336.5 278.5,353.5 278.5,339.5 279.5,337.5 280.5,338.5 281.5,339.5 282.5,340.5 283.5,338.5 284.5,338.5 285.5,338.5 286.5,338.5 286.5,328.5 286.5,336.5 287.5,336.5 287.5,331.5 287.5,339.5 288.5,338.5 289.5,336.5 290.5,339.5 291.5,339.5 292.5,338.5 293.5,338.5 294.5,339.5 295.5,338.5 296.5,338.5 297.5,338.5 298.5,339.5 299.5,339.5 299.5,326.5 299.5,334.5 300.5,334.5 300.5,349.5 300.5,345.5 301.5,345.5 301.5,346.5 301.5,335.5 302.5,335.5 302.5,335.5 303.5,335.5 303.5,340.5 304.5,340.5 304.5,345.5 304.5,336.5 305.5,336.5 305.5,326.5 305.5,334.5 306.5,334.5 306.5,342.5 307.5,336.5 308.5,336.5 308.5,337.5 309.5,337.5 309.5,341.5 310.5,341.5 310.5,337.5 311.5,337.5 311.5,339.5 312.5,339.5 312.5,338.5 313.5,338.5 314.5,338.5 315.5,338.5 315.5,345.5 315.5,341.5 316.5,341.5 316.5,333.5 317.5,333.5 317.5,338.5 318.5,338.5 318.5,336.5 319.5,336.5 319.5,342.5 320.5,342.5 320.5,339.5 321.5,339.5 321.5,347.5 321.5,335.5 322.5,335.5 322.5,341.5 323.5,341.5 323.5,353.5 323.5,339.5 324.5,339.5 324.5,333.5 325.5,333.5 325.5,329.5 325.5,332.5 326.5,332.5 326.5,324.5 326.5,342.5 327.5,342.5 327.5,342.5 328.5,342.5 328.5,341.5 329.5,341.5 329.5,325.5 329.5,334.5 330.5,334.5 330.5,334.5 331.5,341.5 332.5,336.5 333.5,340.5 334.5,336.5 335.5,338.5 336.5,338.5 337.5,338.5 338.5,338.5 338.5,340.5 339.5,340.5 339.5,324.5 339.5,343.5 340.5,343.5 340.5,322.5 340.5,333.5 341.5,333.5 341.5,353.5 341.5,342.5 342.5,342.5 342.5,351.5 342.5,339.5 343.5,339.5 343.5,337.5 344.5,337.5 344.5,338.5 345.5,338.5 345.5,354.5 345.5,338.5 346.5,338.5 346.5,338.5 347.5,338.5 347.5,339.5 348.5,339.5 348.5,322.5 348.5,332.5 349.5,332.5 349.5,329.5 349.5,334.5 350.5,341.5 351.5,341.5 351.5,325.5 351.5,337.5 352.5,337.5 352.5,338.5 353.5,338.5 353.5,339.5 354.5,339.5 354.5,335.5 355.5,339.5 356.5,339.5 357.5,338.5 358.5,337.5 359.5,338.5 360.5,338.5 360.5,334.5 361.5,334.5 361.5,336.5 362.5,336.5 362.5,337.5 363.5,337.5 363.5,342.5 364.5,342.5 364.5,337.5 365.5,340.5 366.5,336.5 367.5,337.5 368.5,337.5 369.5,337.5 369.5,329.5 369.5,334.5 370.5,334.5 370.5,339.5 371.5,339.5 371.5,338.5 372.5,338.5 372.5,349.5 372.5,338.5 373.5,338.5 373.5,340.5 374.5,340.5 374.5,335.5 375.5,335.5 375.5,323.5 375.5,345.5 376.5,345.5 376.5,354.5 376.5,333.5 377.5,333.5 377.5,348.5 377.5,343.5 378.5,343.5 378.5,335.5 379.5,335.5 379.5,324.5 379.5,331.5 380.5,331.5 380.5,343.5 381.5,343.5 381.5,354.5 381.5,340.5 382.5,340.5 382.5,333.5 383.5,333.5 383.5,352.5 383.5,331.5 384.5,331.5 384.5,346.5 384.5,340.5 385.5,340.5 385.5,338.5 386.5,340.5 387.5,338.5 388.5,338.5 388.5,339.5 389.5,339.5 389.5,342.5 390.5,342.5 390.5,351.5 390.5,345.5 391.5,345.5 391.5,342.5 392.5,342.5 392.5,337.5 393.5,337.5 393.5,340.5 394.5,340.5 394.5,339.5 395.5,339.5 395.5,334.5 396.5,336.5 397.5,338.5 398.5,338.5 399.5,338.5 400.5,340.5 401.5,340.5 401.5,347.5 401.5,337.5 402.5,338.5 403.5,338.5 404.5,340.5 405.5,338.5 406.5,339.5 407.5,339.5 408.5,338.5 409.5,338.5 409.5,345.5 409.5,335.5 410.5,335.5 410.5,345.5 410.5,336.5 411.5,336.5 411.5,352.5 411.5,344.5 412.5,344.5 412.5,335.5 413.5,335.5 413.5,331.5 413.5,335.5 414.5,335.5 414.5,349.5 414.5,336.5 415.5,336.5 415.5,340.5 416.5,340.5 416.5,336.5 417.5,336.5 417.5,328.5 417.5,336.5 418.5,339.5 419.5,339.5 419.5,341.5 420.5,341.5 420.5,328.5 420.5,345.5 421.5,345.5 421.5,343.5 422.5,343.5 422.5,349.5 422.5,344.5 423.5,344.5 423.5,335.5 424.5,335.5 424.5,351.5 424.5,332.5 425.5,332.5 425.5,346.5 425.5,342.5 426.5,342.5 426.5,337.5 427.5,337.5 427.5,337.5 428.5,337.5 428.5,338.5 429.5,338.5 429.5,341.5 430.5,341.5 430.5,342.5 431.5,340.5 432.5,340.5 432.5,324.5 432.5,332.5 433.5,332.5 433.5,341.5 434.5,341.5 434.5,331.5 434.5,340.5 435.5,340.5 435.5,341.5 436.5,338.5 437.5,337.5 438.5,337.5 438.5,332.5 438.5,336.5 439.5,336.5 439.5,344.5 439.5,338.5 440.5,338.5 440.5,338.5 441.5,338.5 441.5,345.5 441.5,339.5 442.5,339.5 442.5,322.5 442.5,343.5 443.5,343.5 443.5,334.5 444.5,334.5 444.5,336.5 445.5,340.5 445.5,489.5 446.5,501.5 448.5,498.5 452.5,499.5 455.5,505.5 458.5,506.5 461.5,505.5 465.5,501.5 467.5,505.5 469.5,505.5 473.5,502.5 476.5,502.5 478.5,505.5 482.5,500.5 486.5,501.5 488.5,504.5 490.5,502.5 493.5,505.5 496.5,503.5 499.5,500.5 501.5,503.5 504.5,505.5 508.5,504.5 511.5,500.5 514.5,505.5 517.5,506.5 521.5,503.5 524.5,500.5 528.5,503.5 531.5,503.5 534.5,506.5 537.5,502.5 541.5,499.5 543.5,503.5 546.5,500.5 549.5,504.5 553.5,499.5 556.5,506.5 560.5,504.5 562.5,498.5 565.5,501.5 568.5,504.5 571.5,500.5 575.5,504.5 578.5,503.5 581.5,503.5 584.5,503.5 587.5,500.5 589.5,503.5 592.5,506.5 596.5,505.5 600.5,500.5 602.5,505.5 606.5,503.5 609.5,502.5 612.5,506.5 615.5,500.5 618.5,505.5 622.5,501.5 626.5,506.5 629.5,506.5" fill="none" stroke="#800000" stroke-width="1"/>
<polyline points="445.5,329.5 446.5,348.5 447.5,326.5 448.5,354.5 449.5,325.5 450.5,350.5 451.5,330.5 452.5,352.5 453.5,341.5 454.5,358.5 455.5,336.5 456.5,353.5 457.5,330.5 458.5,355.5 459.5,324.5 460.5,356.5 461.5,324.5 462.5,346.5 463.5,328.5 464.5,349.5 465.5,325.5 466.5,349.5 467.5,326.5 468.5,352.5 469.5,323.5 470.5,331.5 471.5,359.5 472.5,329.5 473.5,361.5 474.5,328.5 475.5,343.5 476.5,323.5 477.5,350.5 478.5,330.5 479.5,352.5 480.5,323.5 481.5,328.5 482.5,361.5 483.5,329.5 484.5,357.5 485.5,324.5 486.5,356.5 487.5,364.5 488.5,323.5 489.5,359.5 490.5,323.5 491.5,344.5 492.5,350.5 493.5,329.5 494.5,340.5 495.5,326.5 496.5,346.5 497.5,338.5 498.5,330.5 499.5,352.5 500.5,333.5 501.5,346.5 502.5,339.5 503.5,352.5 504.5,331.5 505.5,342.5 506.5,330.5 507.5,357.5 508.5,330.5 509.5,339.5 510.5,332.5 511.5,361.5 512.5,328.5 513.5,354.5 514.5,339.5 515.5,342.5 516.5,324.5 517.5,351.5 518.5,328.5 519.5,354.5 520.5,328.5 521.5,351.5 522.5,350.5 523.5,326.5 524.5,350.5 525.5,329.5 526.5,357.5 527.5,329.5 528.5,351.5 529.5,327.5 530.5,355.5 531.5,334.5 532.5,344.5 533.5,326.5 534.5,351.5 535.5,326.5 536.5,350.5 537.5,331.5 538.5,358.5 539.5,329.5 540.5,363.5 541.5,326.5 542.5,356.5 543.5,331.5 544.5,322.5 545.5,344.5 546.5,331.5 547.5,354.5 548.5,325.5 549.5,322.5 550.5,351.5 551.5,326.5 552.5,342.5 553.5,325.5 554.5,362.5 555.5,329.5 556.5,351.5 557.5,340.5 558.5,344.5 559.5,331.5 560.5,353.5 561.5,336.5 562.5,343.5 563.5,326.5 564.5,343.5 565.5,325.5 566.5,350.5 567.5,324.5 568.5,357.5 569.5,322.5 570.5,349.5 571.5,325.5 572.5,348.5 573.5,327.5 574.5,341.5 575.5,342.5 576.5,358.5 577.5,351.5 578.5,322.5 579.5,358.5 580.5,357.5 581.5,338.5 582.5,352.5 583.5,339.5 584.5,360.5 585.5,325.5 586.5,347.5 587.5,329.5 588.5,347.5 589.5,360.5 590.5,331.5 591.5,346.5 592.5,330.5 593.5,339.5 594.5,338.5 595.5,349.5 596.5,326.5 597.5,349.5 598.5,327.5 599.5,359.5 600.5,325.5 601.5,361.5 602.5,329.5 603.5,346.5 604.5,350.5 605.5,327.5 606.5,353.5 607.5,324.5 608.5,360.5 609.5,352.5 610.5,325.5 611.5,344.5 612.5,327.5 613.5,348.5 614.5,324.5 615.5,364.5 616.5,323.5 617.5,357.5 618.5,323.5 619.5,343.5 620.5,331.5 621.5,359.5 622.5,326.5 623.5,349.5 624.5,331.5 625.5,349.5 626.5,323.5 627.5,361.5 628.5,337.5 629.5,357.5 630.5,329.5 630.5,344.5" fill="none" stroke="#008000" stroke-width="1"/>
<rect x="74.5" y="266.5" width="557" height="302" fill="none" stroke="#000" stroke-width="1"/>
<line x1="69" y1="568.5" x2="74" y2="568.5" stroke="#000" stroke-width="1"/>
<line x1="69" y1="542.5" x2="74" y2="542.5" stroke="#000" stroke-width="1"/>
<line x1="69" y1="517.5" x2="74" y2="517.5" stroke="#000" stroke-width="1"/>
<line x1="69" y1="492.5" x2="74" y2="492.5" stroke="#000" stroke-width="1"/>
<line x1="69" y1="467.5" x2="74" y2="467.5" stroke="#000" stroke-width="1"/>
<line x1="69" y1="442.5" x2="74" y2="442.5" stroke="#000" stroke-width="1"/>
<line x1="69" y1="417.5" x2="74" y2="417.5" stroke="#000" stroke-width="1"/>
<line x1="69" y1="391.5" x2="74" y2="391.5" stroke="#000" stroke-width="1"/>
<line x1="69" y1="366.5" x2="74" y2="366.5" stroke="#000" stroke-width="1"/>
<line x1="69" y1="341.5" x2="74" y2="341.5" stroke="#000" stroke-width="1"/>
<line x1="69" y1="316.5" x2="74" y2="316.5" stroke="#000" stroke-width="1"/>
<line x1="69" y1="291.5" x2="74" y2="291.5" stroke="#000" stroke-width="1"/>
<line x1="69" y1="266.5" x2="74" y2="266.5" stroke="#000" stroke-width="1"/>
<line x1="74.5" y1="568" x2="74.5" y2="573" stroke="#000" stroke-width="1"/>
<line x1="166.5" y1="568" x2="166.5" y2="573" stroke="#000" stroke-width="1"/>
<line x1="259.5" y1="568" x2="259.5" y2="573" stroke="#000" stroke-width="1"/>
<line x1="352.5" y1="568" x2="352.5" y2="573" stroke="#000" stroke-width="1"/>
<line x1="445.5" y1="568" x2="445.5" y2="573" stroke="#000" stroke-width="1"/>
<line x1="538.5" y1="568" x2="538.5" y2="573" stroke="#000" stroke-width="1"/>
<line x1="631.5" y1="568" x2="631.5" y2="573" stroke="#000" stroke-width="1"/>
</svg>
<div class="t" style="right:773px;top:562px">0,000</div>
<div class="t" style="right:773px;top:536px">4,000</div>
<div class="t" style="right:773px;top:511px">8,000</div>
<div class="t" style="right:773px;top:486px">12,000</div>
<div class="t" style="right:773px;top:461px">16,000</div>
<div class="t" style="right:773px;top:436px">20,000</div>
<div class="t" style="right:773px;top:411px">24,000</div>
<div class="t" style="right:773px;top:385px">28,000</div>
<div class="t" style="right:773px;top:360px">32,000</div>
<div class="t" style="right:773px;top:335px">36,000</div>
<div class="t" style="right:773px;top:310px">40,000</div>
<div class="t" style="right:773px;top:285px">44,000</div>
<div class="t" style="right:773px;top:260px">48,000</div>
<div class="t" style="left:44px;width:60px;text-align:center;top:574px">0:00:00</div>
<div class="t" style="left:136px;width:60px;text-align:center;top:574px">0:00:30</div>
<div class="t" style="left:229px;width:60px;text-align:center;top:574px">0:01:00</div>
<div class="t" style="left:322px;width:60px;text-align:center;top:574px">0:01:30</div>
<div class="t" style="left:415px;width:60px;text-align:center;top:574px">0:02:00</div>
<div class="t" style="left:508px;width:60px;text-align:center;top:574px">0:02:30</div>
<div class="t" style="left:601px;width:60px;text-align:center;top:574px">0:03:00</div>
<div class="t" style="left:14px;top:231px;font-size:19.4px;line-height:22px;letter-spacing:0">Throughput</div>
<div class="t" style="left:283px;top:595px;font-size:13.3px;line-height:16px;letter-spacing:0">Elapsed time (h:mm:ss)</div>
<div class="t" style="left:0px;top:411px;width:40px;text-align:center;transform:rotate(-90deg);font-size:12.6px;line-height:16px;letter-spacing:0">Mbps</div>
<div class="t" style="left:728px;top:222px;font-size:13px;line-height:16px;font-weight:bold;letter-spacing:0">Legend</div>
<div class="ab" style="left:668px;top:240px;width:166px;height:378px;border-top:1px solid #000;border-left:1px solid #000;border-right:1px solid #000"></div>
<div class="ab" style="left:675px;top:247px;width:19px;height:1px;background:#800000"></div>
<div class="t" style="left:697px;top:242px;color:#800000">Pair 1 -- lo</div>
<div class="ab" style="left:675px;top:260px;width:19px;height:1px;background:#008000"></div>
<div class="t" style="left:697px;top:255px;color:#008000">Pair 2 -- hi</div>
<div class="ab" style="left:675px;top:273px;width:19px;height:1px;background:#800080"></div>
<div class="t" style="left:697px;top:268px;color:#800080">Pair 3 -- normal</div>
<div class="ab" style="left:817px;top:241px;width:16px;height:360px;background:linear-gradient(90deg,#EEEDE5,#FDFDFA)"></div>
<div class="ab" style="left:669px;top:601px;width:148px;height:17px;background:linear-gradient(180deg,#EFEDE4,#FDFDFA)"></div>
<div class="ab" style="left:817px;top:600px;width:16px;height:18px;background:#ECE9D8"></div>
<div class="ab" style="left:818px;top:242px;width:14px;height:15px;border-radius:2px;border:1px solid #fff;background:linear-gradient(180deg,#F2F1EA,#E6E4DA);box-shadow:1px 1px 0 #DCDAD0"></div><svg class="ab" style="left:819px;top:244px" width="12" height="12"><path d="M2 7 L6 3 L10 7" fill="none" stroke="#C5C3B6" stroke-width="2"/></svg>
<div class="ab" style="left:818px;top:585px;width:14px;height:15px;border-radius:2px;border:1px solid #fff;background:linear-gradient(180deg,#F2F1EA,#E6E4DA);box-shadow:1px 1px 0 #DCDAD0"></div><svg class="ab" style="left:819px;top:587px" width="12" height="12"><path d="M2 3 L6 7 L10 3" fill="none" stroke="#C5C3B6" stroke-width="2"/></svg>
<div class="ab" style="left:670px;top:602px;width:14px;height:15px;border-radius:2px;border:1px solid #fff;background:linear-gradient(180deg,#F2F1EA,#E6E4DA);box-shadow:1px 1px 0 #DCDAD0"></div><svg class="ab" style="left:671px;top:604px" width="12" height="12"><path d="M7 2 L3 6 L7 10" fill="none" stroke="#C5C3B6" stroke-width="2"/></svg>
<div class="ab" style="left:800px;top:602px;width:14px;height:15px;border-radius:2px;border:1px solid #fff;background:linear-gradient(180deg,#F2F1EA,#E6E4DA);box-shadow:1px 1px 0 #DCDAD0"></div><svg class="ab" style="left:801px;top:604px" width="12" height="12"><path d="M4 2 L8 6 L4 10" fill="none" stroke="#C5C3B6" stroke-width="2"/></svg>
<div class="ab" style="left:833px;top:240px;width:1px;height:378px;background:#000"></div>
<div class="ab" style="left:834px;top:55px;width:2px;height:564px;background:#F3F1E6"></div>
<div class="ab" style="left:836px;top:55px;width:1px;height:564px;background:#ACA899"></div>
<div class="ab" style="left:0;top:618px;width:837px;height:1px;background:#F3F1E6"></div>
<div class="ab" style="left:0;top:620px;width:837px;height:1px;background:#A7A491"></div>
<div class="ab" style="left:0;top:621px;width:837px;height:1px;background:#767467"></div>
<div class="ab" style="left:0;top:622px;width:837px;height:1px;background:#C9C6B6"></div>
<div class="stp" style="left:3px;width:70px"></div>
<div class="t" style="left:6px;top:629px">Pairs: 3</div>
<div class="stp" style="left:77px;width:163px"></div>
<div class="t" style="left:80px;top:629px">Start: 17.06.2006, 5:16:01</div>
<div class="stp" style="left:244px;width:159px"></div>
<div class="t" style="left:247px;top:629px">End: 17.06.2006, 5:19:01</div>
<div class="stp" style="left:408px;width:135px"></div>
<div class="t" style="left:411px;top:629px">Run time: 00:03:00</div>
<div class="stp" style="left:548px;width:96px"></div>
<div class="t" style="left:551px;top:629px">Ran to completion</div>
</body></html>
